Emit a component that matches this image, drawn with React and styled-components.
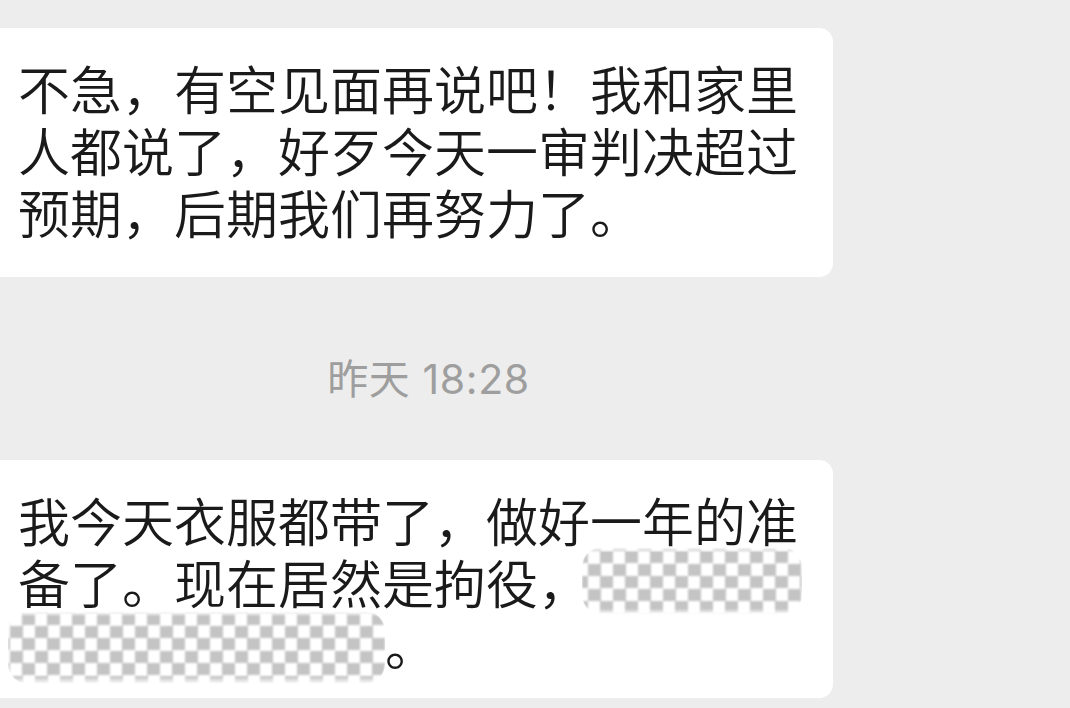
import React from 'react'
import styled, { createGlobalStyle } from 'styled-components'

const GlobalStyle = createGlobalStyle`
    html, body {
        margin: 0;
        padding: 0;
        background: #ededed;
        overflow: hidden;
    }
`

const Page = styled.div`
    width: 1070px;
    height: 708px;
    background: #ededed;
    padding-top: 28px;
    box-sizing: border-box;
    font-family: "Noto Sans CJK SC", "Noto Sans", sans-serif;
    overflow: hidden;
`

const Bubble = styled.div`
    width: 863px;
    margin-left: -30px;
    box-sizing: border-box;
    background: #fff;
    border-radius: 14px;
    padding: 29px 0 ${props => props.bottom || 34}px 48px;
    color: #1a1a1a;
    font-size: 52px;
    font-weight: 350;
    line-height: 62px;
`

const Line = styled.div`
    white-space: nowrap;
    height: 62px;
`

const Stamp = styled.div`
    width: 857px;
    text-align: center;
    color: #9e9e9e;
    font-family: Inter, "Noto Sans CJK SC", sans-serif;
    font-size: 41px;
    letter-spacing: 0.6px;
    line-height: 50px;
    margin: 77px 0 56px;
`

const Mosaic = styled.span`
    display: inline-block;
    vertical-align: top;
    width: ${props => props.w}px;
    height: ${props => props.h}px;
    margin-top: ${props => props.top || 0}px;
    margin-left: ${props => props.left || 0}px;
    background-color: #fff;
    background-image: conic-gradient(#c4c4c4 25%, #fff 0 50%, #c4c4c4 0 75%, #fff 0);
    background-size: 25px 25px;
    background-position: ${props => props.pos || '0 0'};
    border-radius: 20px;
    filter: blur(0.9px);
    -webkit-mask-image: linear-gradient(to bottom, transparent 0, #000 8%, #000 90%, transparent 100%);
    mask-image: linear-gradient(to bottom, transparent 0, #000 8%, #000 90%, transparent 100%);
`

const App = () => {
    return (
        <Page>
            <GlobalStyle />
            <Bubble>
                <Line>不急，有空见面再说吧！我和家里</Line>
                <Line>人都说了，好歹今天一审判决超过</Line>
                <Line>预期，后期我们再努力了。</Line>
            </Bubble>
            <Stamp>昨天 18:28</Stamp>
            <Bubble bottom={23}>
                <Line>我今天衣服都带了，做好一年的准</Line>
                <Line>备了。现在居然是拘役，<Mosaic w={220} h={68} top={-4} left={-8} pos="6px 4px" /></Line>
                <Line><Mosaic w={377} h={73} top={-2} left={-10} pos="2px 2px" />。</Line>
            </Bubble>
        </Page>
    )
}

export default App
